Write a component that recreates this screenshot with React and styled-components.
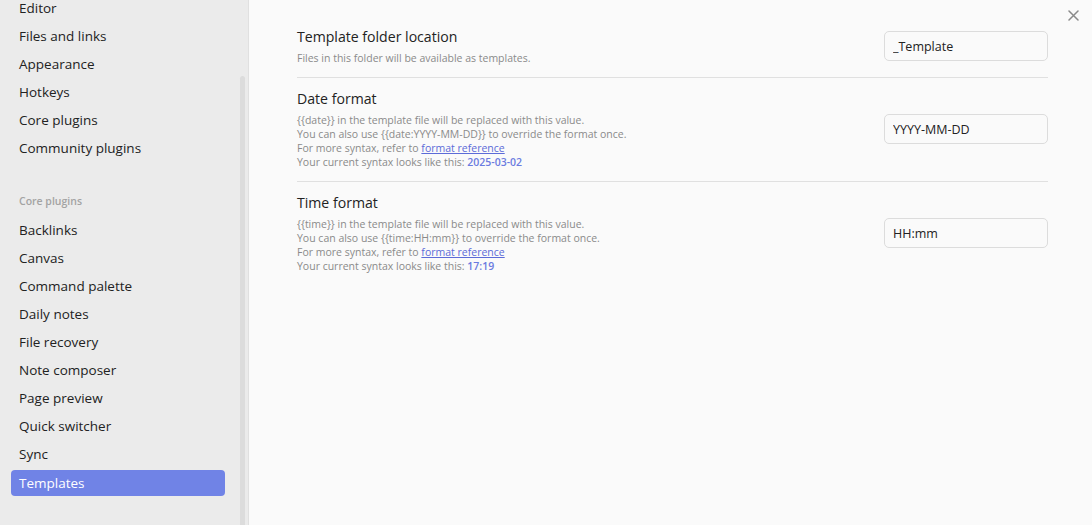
import React from "react";
import styled, { createGlobalStyle } from "styled-components";

const Global = createGlobalStyle`
  html, body { margin: 0; padding: 0; height: 100%; }
  body { font-family: "Open Sans", "Noto Sans", sans-serif; background: #fafafa; overflow: hidden; }
  #root { height: 100%; }
`;

const Shell = styled.div`
  display: flex;
  width: 1092px;
  height: 525px;
  overflow: hidden;
`;

const Sidebar = styled.aside`
  width: 248px;
  flex: 0 0 248px;
  display: flex;
  background: #ebebeb;
  border-right: 1px solid #e0e0e0;
  box-sizing: content-box;
`;

const NavScroll = styled.div`
  flex: 1;
  overflow: hidden;
  padding: 0 15px 0 11px;
`;

const NavList = styled.nav`
  display: flex;
  flex-direction: column;
  gap: 2.1px;
  margin-top: -5px;
`;

const NavItem = styled.div`
  height: 26px;
  display: flex;
  align-items: center;
  padding: 0 8px;
  border-radius: 4px;
  font-size: 13.5px;
  color: ${(p) => (p.$active ? "#ffffff" : "#222222")};
  background: ${(p) => (p.$active ? "#7083e6" : "transparent")};
`;

const GroupTitle = styled.div`
  margin-top: 29px;
  margin-bottom: 6px;
  padding: 0 8px;
  height: 16px;
  line-height: 16px;
  font-size: 10.5px;
  font-weight: 600;
  color: #a3a3a3;
`;

const ScrollTrack = styled.div`
  width: 8px;
  flex: 0 0 8px;
  display: flex;
`;

const ScrollThumb = styled.div`
  width: 5px;
  margin-top: 76px;
  height: 460px;
  border-radius: 3px 3px 0 0;
  background: #dcdcdc;
`;

const Content = styled.main`
  flex: 1;
  position: relative;
  background: #fafafa;
  padding: 16px 44px 0 48px;
`;

const Close = styled.button`
  position: absolute;
  top: 8px;
  right: 12px;
  width: 14px;
  height: 14px;
  padding: 0;
  border: 0;
  background: transparent;
  display: flex;
  align-items: center;
  justify-content: center;
`;

const Setting = styled.div`
  display: flex;
  align-items: center;
  gap: 16px;
  padding: 11px 0 12px;
  border-top: ${(p) => (p.$first ? "none" : "1px solid #e0e0e0")};
`;

const Info = styled.div`
  flex: 1;
  display: flex;
  flex-direction: column;
  gap: 4px;
`;

const Name = styled.div`
  font-size: 14.1px;
  line-height: 20px;
  color: #222222;
`;

const Desc = styled.div`
  font-size: 10.5px;
  line-height: 14px;
  color: #8a8a8a;
`;

const Link = styled.a`
  color: #5c6bd8;
  text-decoration: underline;
`;

const Value = styled.span`
  color: #6b7be0;
  font-weight: 600;
`;

const Input = styled.input`
  width: 164px;
  height: 30px;
  box-sizing: border-box;
  border: 1px solid #dcdcdc;
  border-radius: 5px;
  background: #fafafa;
  padding: 0 8px;
  font-family: "Open Sans", "Noto Sans", sans-serif;
  font-size: 12.5px;
  color: #222222;
  outline: none;
`;

const top = ["Editor", "Files and links", "Appearance", "Hotkeys", "Core plugins", "Community plugins"];
const core = [
  "Backlinks",
  "Canvas",
  "Command palette",
  "Daily notes",
  "File recovery",
  "Note composer",
  "Page preview",
  "Quick switcher",
  "Sync",
  "Templates",
];

export default function App() {
  return (
    <>
      <Global />
      <Shell>
        <Sidebar>
          <NavScroll>
            <NavList>
              {top.map((t) => (
                <NavItem key={t}>{t}</NavItem>
              ))}
              <GroupTitle>Core plugins</GroupTitle>
              {core.map((t) => (
                <NavItem key={t} $active={t === "Templates"}>
                  {t}
                </NavItem>
              ))}
            </NavList>
          </NavScroll>
          <ScrollTrack>
            <ScrollThumb />
          </ScrollTrack>
        </Sidebar>
        <Content>
          <Close aria-label="Close">
            <svg width="11" height="11" viewBox="0 0 11 11">
              <path d="M1 1L10 10M10 1L1 10" stroke="#8a8a8a" strokeWidth="1.5" strokeLinecap="round" />
            </svg>
          </Close>
          <Setting $first>
            <Info>
              <Name>Template folder location</Name>
              <Desc>Files in this folder will be available as templates.</Desc>
            </Info>
            <Input defaultValue="_Template" />
          </Setting>
          <Setting>
            <Info>
              <Name>Date format</Name>
              <Desc>
                {"{{date}} in the template file will be replaced with this value."}
                <br />
                {"You can also use {{date:YYYY-MM-DD}} to override the format once."}
                <br />
                For more syntax, refer to <Link href="#">format reference</Link>
                <br />
                Your current syntax looks like this: <Value>2025-03-02</Value>
              </Desc>
            </Info>
            <Input defaultValue="YYYY-MM-DD" />
          </Setting>
          <Setting>
            <Info>
              <Name>Time format</Name>
              <Desc>
                {"{{time}} in the template file will be replaced with this value."}
                <br />
                {"You can also use {{time:HH:mm}} to override the format once."}
                <br />
                For more syntax, refer to <Link href="#">format reference</Link>
                <br />
                Your current syntax looks like this: <Value>17:19</Value>
              </Desc>
            </Info>
            <Input defaultValue="HH:mm" />
          </Setting>
        </Content>
      </Shell>
    </>
  );
}
